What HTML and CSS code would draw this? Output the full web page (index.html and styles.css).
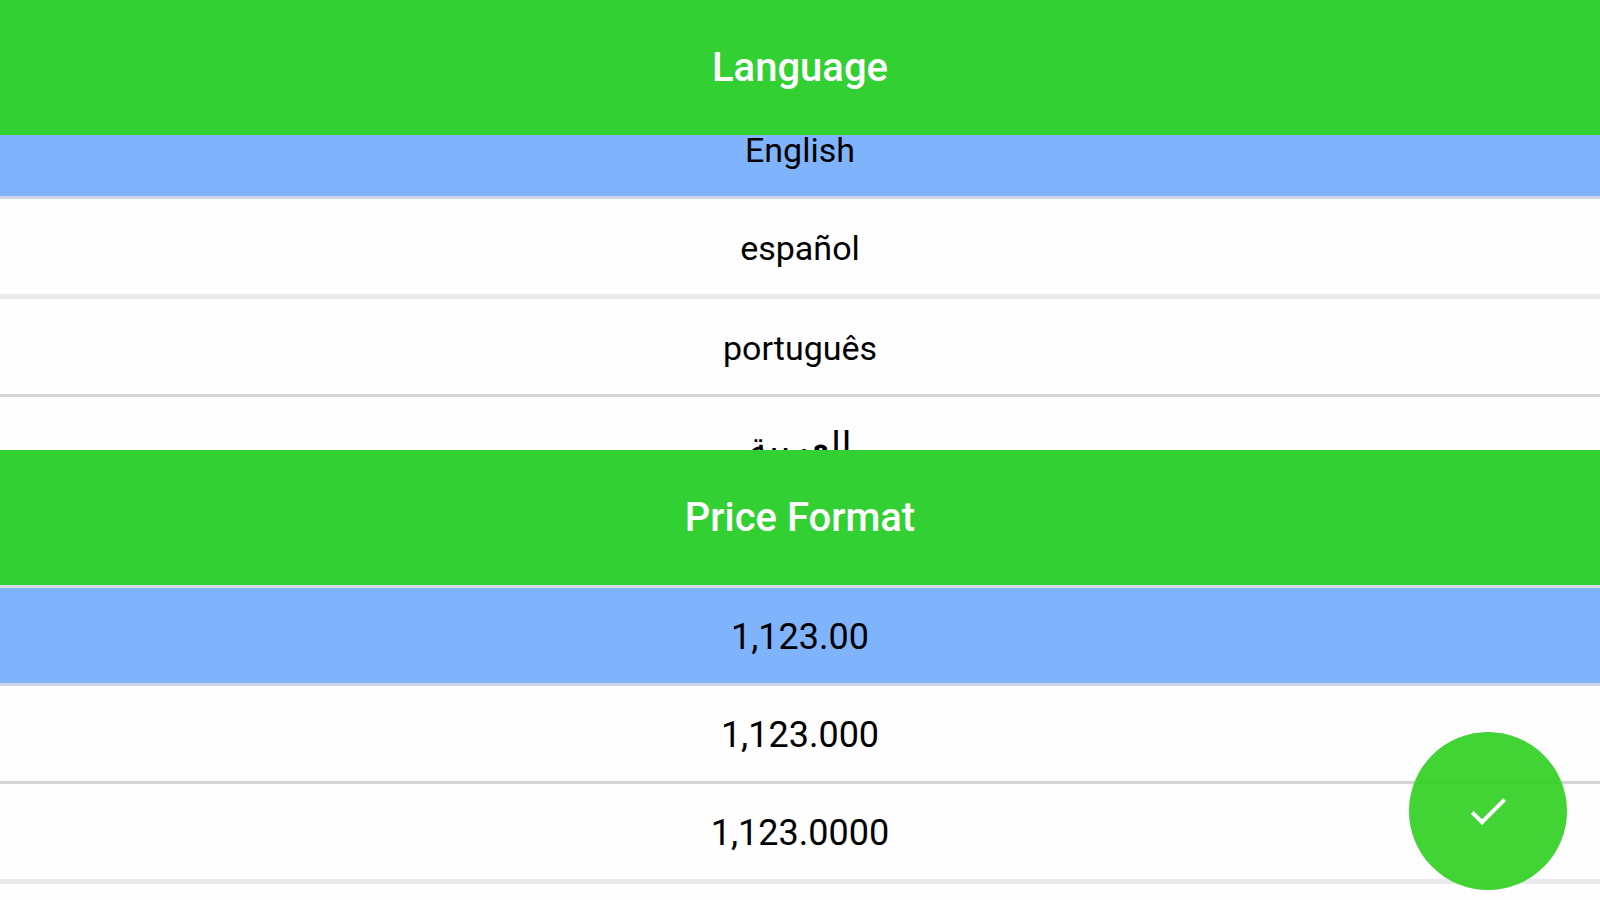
FILE: index.html
```html
<!DOCTYPE html>
<html lang="en">
<head>
<meta charset="utf-8">
<meta name="viewport" content="width=device-width, initial-scale=1">
<title>Language and Price Format</title>
<link rel="stylesheet" href="styles.css">
</head>
<body>
<main class="settings">
  <section class="panel">
    <h1 class="panel-title">Language</h1>
    <div class="viewport">
      <ul class="options options-scrolled">
        <li><button class="option selected" type="button" aria-pressed="true">English</button></li>
        <li><button class="option thick" type="button" lang="es">español</button></li>
        <li><button class="option" type="button" lang="pt">português</button></li>
        <li><button class="option arabic" type="button" lang="ar" dir="rtl">العربية</button></li>
      </ul>
    </div>
  </section>
  <section class="panel">
    <h2 class="panel-title">Price Format</h2>
    <div class="viewport viewport-ruled">
      <ul class="options options-price">
        <li><button class="option selected" type="button" aria-pressed="true">1,123.00</button></li>
        <li><button class="option" type="button">1,123.000</button></li>
        <li><button class="option thick" type="button">1,123.0000</button></li>
      </ul>
    </div>
  </section>
</main>
<button class="confirm" type="button" aria-label="Confirm">
  <svg viewBox="0 0 24 24" aria-hidden="true"><path d="M9 16.17 4.83 12l-1.42 1.41L9 19 21 7l-1.41-1.41z"/></svg>
</button>
</body>
</html>
```
FILE: styles.css
```css
* {
  box-sizing: border-box;
}

body {
  margin: 0;
  background: #fefefe;
  font-family: Roboto, "Liberation Sans", sans-serif;
}

.settings {
  display: flex;
  flex-direction: column;
  height: 100vh;
  overflow: hidden;
}

.panel {
  display: flex;
  flex: 1 1 0;
  flex-direction: column;
  min-height: 0;
}

.panel-title {
  flex: none;
  margin: 0;
  padding: 44px 16px 43px;
  background: #33d033;
  color: #fff;
  font-size: 40px;
  line-height: 48px;
  font-weight: 500;
  text-align: center;
}

.viewport {
  flex: 1;
  min-height: 0;
  overflow: hidden;
}

.viewport-ruled {
  border-top: 3px solid #d6dce0;
}

.options {
  margin: 0;
  padding: 0;
  list-style: none;
  font-size: 34px;
}

.options-price {
  font-size: 36px;
}

/* The language list rests partly scrolled under its title. */
.options-scrolled {
  margin-top: -34px;
}

.option {
  display: block;
  width: 100%;
  padding: 29px 16px 26px;
  border: 0;
  border-bottom: 3px solid #d4d4d6;
  background: transparent;
  color: #000;
  font: inherit;
  line-height: 40px;
  text-align: center;
}

.option.thick {
  border-bottom: 5px solid #eaeaea;
}

.option.selected {
  background: #7fb3fb;
  border-bottom-color: #d0d4e6;
}

.option.arabic {
  font-family: "DejaVu Sans", sans-serif;
  font-size: 38px;
}

.confirm {
  position: fixed;
  right: 33px;
  bottom: 10px;
  display: grid;
  place-items: center;
  width: 158px;
  height: 158px;
  padding: 0;
  border: 0;
  border-radius: 50%;
  background: rgba(49, 208, 35, 0.92);
}

.confirm svg {
  width: 48px;
  height: 48px;
  fill: #fff;
}
```
